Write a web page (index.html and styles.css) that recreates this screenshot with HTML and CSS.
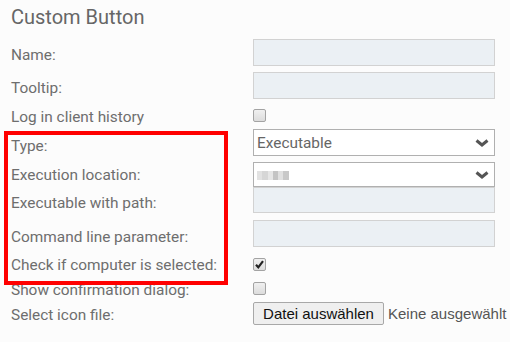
FILE: index.html
```html
<!DOCTYPE html>
<html>
<head>
<meta charset="utf-8">
<link rel="stylesheet" href="styles.css">
</head>
<body>
<div class="page">
  <h1 class="title">Custom Button</h1>
  <div class="form">
    <div class="row r-name">
      <div class="label lb5">Name:</div>
      <input class="text" type="text">
    </div>
    <div class="row r-tooltip">
      <div class="label lb5">Tooltip:</div>
      <input class="text" type="text">
    </div>
    <div class="row r-log">
      <div class="label lb2">Log in client history</div>
      <span class="cb"></span>
    </div>
    <div class="row r-type">
      <div class="label lb7">Type:</div>
      <div class="select">
        <span class="sel-text">Executable</span>
        <svg class="chev" width="14" height="8" viewBox="0 0 14 8"><polyline points="1.5,1.5 7,6 12.5,1.5" fill="none" stroke="#555" stroke-width="3" stroke-linejoin="miter"/></svg>
      </div>
    </div>
    <div class="row r-loc">
      <div class="label lb1">Execution location:</div>
      <div class="select">
        <span class="blur"></span>
        <svg class="chev" width="14" height="8" viewBox="0 0 14 8"><polyline points="1.5,1.5 7,6 12.5,1.5" fill="none" stroke="#555" stroke-width="3" stroke-linejoin="miter"/></svg>
      </div>
    </div>
    <div class="row r-path">
      <div class="label lb6">Executable with path:</div>
      <input class="text" type="text">
    </div>
    <div class="row r-cmd">
      <div class="label lb6">Command line parameter:</div>
      <input class="text" type="text">
    </div>
    <div class="row r-check">
      <div class="label lb1">Check if computer is selected:</div>
      <span class="cb checked"><svg width="11" height="11" viewBox="0 0 11 11"><path d="M2 5.8 L4.3 8.3 L9 2.2" fill="none" stroke="#222" stroke-width="2.2"/></svg></span>
    </div>
    <div class="row r-show">
      <div class="label lb3">Show confirmation dialog:</div>
      <span class="cb"></span>
    </div>
    <div class="row r-file">
      <div class="label lb2">Select icon file:</div>
      <div class="file">
        <button class="file-btn" type="button">Datei auswählen</button>
        <span class="file-none">Keine ausgewählt</span>
      </div>
    </div>
  </div>
  <div class="highlight"></div>
</div>
</body>
</html>
```

FILE: styles.css
```css
html, body {
  margin: 0;
  padding: 0;
  background: #fcfcfc;
}
body {
  font-family: Roboto, "Liberation Sans", sans-serif;
  color: #6e6e6e;
  width: 510px;
  height: 342px;
  overflow: hidden;
}
.page {
  position: relative;
  padding-left: 11px;
}
.title {
  margin: 6px 0 0 0;
  font-size: 20px;
  line-height: 23px;
  font-weight: 400;
  color: #666;
}
.form {
  margin-top: 10px;
}
.row {
  display: flex;
  align-items: center;
}
.label {
  width: 242px;
  flex: none;
  font-size: 15.4px;
  line-height: 18px;
  white-space: nowrap;
}
.lb1 { padding-top: 1px; }
.lb2 { padding-top: 2px; }
.lb3 { padding-top: 3px; }
.lb5 { padding-top: 5px; }
.lb6 { padding-top: 6px; }
.lb7 { padding-top: 7px; }

.r-name { height: 27px; margin-bottom: 6px; }
.r-tooltip { height: 27px; margin-bottom: 10px; }
.r-log { height: 13px; margin-bottom: 7px; }
.r-type { height: 27px; margin-bottom: 6px; }
.r-loc { height: 25px; }
.r-path { height: 26px; margin-bottom: 7px; }
.r-cmd { height: 27px; margin-bottom: 11px; }
.r-check { height: 13px; margin-bottom: 11px; }
.r-show { height: 13px; margin-bottom: 7px; }
.r-file { height: 23px; }

.text {
  box-sizing: border-box;
  width: 242px;
  height: 100%;
  margin: 0;
  border: 1px solid #d2d2d2;
  background: #ebf0f4;
  outline: none;
  padding: 0;
}
.cb {
  box-sizing: border-box;
  width: 13px;
  height: 13px;
  border: 1px solid #a3a3a3;
  border-radius: 2px;
  background: linear-gradient(#f0f0f0, #dcdcdc);
  display: flex;
  align-items: center;
  justify-content: center;
}
.select {
  box-sizing: border-box;
  width: 242px;
  height: 100%;
  border: 1px solid #b0b0b0;
  background: #fff;
  display: flex;
  align-items: center;
  justify-content: space-between;
  padding: 0 5px 0 3px;
}
.sel-text {
  font-size: 15.4px;
  line-height: 18px;
  color: #666;
  padding-top: 1px;
}
.chev {
  display: block;
}
.blur {
  display: block;
  width: 32px;
  height: 9px;
  margin-top: 1px;
  background: linear-gradient(90deg, #e2e2e2 0 5px, #d6d6d6 5px 11px, #e6e6e6 11px 16px, #c4c4c4 16px 21px, #e0e0e0 21px 26px, #c8c8c8 26px 32px);
}
.file {
  display: flex;
  align-items: center;
  height: 100%;
}
.file-btn {
  box-sizing: border-box;
  height: 23px;
  width: 131px;
  margin: 0;
  padding: 0;
  border: 1px solid #a8a8a8;
  border-radius: 2px;
  background: #efefef;
  font-family: "Liberation Sans", Arial, sans-serif;
  font-size: 15px;
  color: #111;
}
.file-none {
  margin-left: 4px;
  font-family: "Liberation Sans", Arial, sans-serif;
  font-size: 15px;
  color: #555;
  white-space: nowrap;
}
.highlight {
  position: absolute;
  left: 4px;
  top: 125px;
  width: 224px;
  height: 154px;
  box-sizing: border-box;
  border: 4px solid #ff0000;
}
```
